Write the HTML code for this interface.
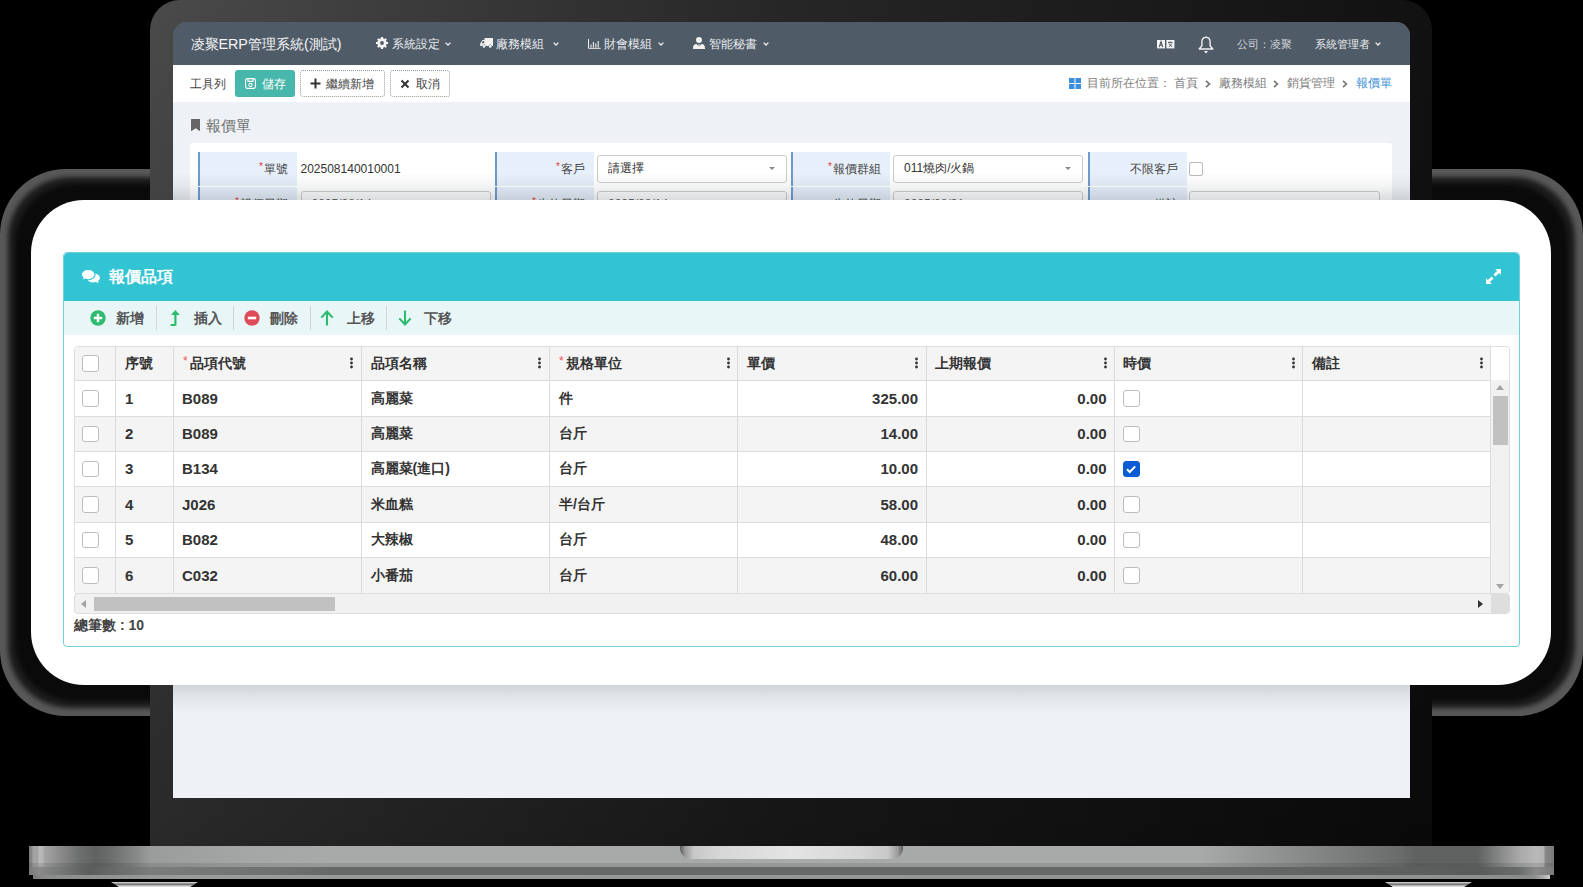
<!DOCTYPE html>
<html><head><meta charset="utf-8">
<style>
*{box-sizing:border-box;margin:0;padding:0}
html,body{width:1583px;height:887px;overflow:hidden;background:#000}
body{position:relative;font-family:"Liberation Sans",sans-serif;color:#333}
.a{position:absolute}
/* shadow ring on transparent bg */
#ringA{left:0;top:169px;width:1583px;height:547px;border-radius:66px;background:#585858}
#ringB{left:8px;top:177px;width:1567px;height:531px;border-radius:62px;background:#1c1c1c;filter:blur(2.5px)}
#ringC{left:15px;top:184px;width:1553px;height:517px;border-radius:60px;background:#0a0a0a;filter:blur(2.5px)}
#bezel{left:150px;top:0;width:1282px;height:846px;border-radius:30px 30px 0 0;
 background:linear-gradient(to right,#4a4a4a 0%,#262626 50%,#111 100%);overflow:hidden}
#bezel:after{content:"";position:absolute;left:0;top:0;right:0;bottom:0;background:linear-gradient(to bottom,rgba(0,0,0,0) 0%,rgba(0,0,0,.45) 100%)}
#screen{left:173px;top:22px;width:1237px;height:776px;border-radius:14px 14px 0 0;background:linear-gradient(to bottom,#4f5b67 0,#4f5b67 43px,#eef1f5 43px);overflow:hidden}
#hdr{left:0;top:0;width:1237px;height:43px;background:#4f5b67;color:#fff}
#tb{left:0;top:43px;width:1237px;height:37px;background:#fff}
.nav{position:absolute;top:0.6px;height:43px;line-height:43px;font-size:11.5px;color:#e9ecef;white-space:nowrap}
/* base */
#base{left:29px;top:846px;width:1525px;height:29px;
 background:linear-gradient(to right,#7c7c7c 0px,#8a8a8a 3px,#a3a3a3 4px,#a3a3a3 9px,#bababa 10px,#b8b8b8 13px,#a4a4a4 16px,#8c8d8c 30px,#6e706f 50px,#5f6261 66px,#6a6c6b 80px,#8a8c8b 110px,#9a9c9b 121px,#a5a7a6 221px,#a8aaa9 300px,#a8aaa9 1171px,#6a6c6b 1371px,#5f6261 1385px,#5f6261 1449px,#7c7e7d 1465px,#a8a8a8 1490px,#b8b8b8 1507px,#b3b3b3 1515px,#888 1516px,#7a7a7a 1525px)}
#base2{left:29px;top:863px;width:1525px;height:4px;background:rgba(40,50,50,.14)}
#base3{left:29px;top:867px;width:1525px;height:8px;background:linear-gradient(to right,#7a7a7a 0,#8a8a8a 10px,#5a5d5c 60px,#7a7c7b 121px,#6e7170 250px,#666968 300px,#666968 1171px,#5c5f5e 1385px,#585b5a 1449px,#6a6c6b 1490px,#8a8a8a 1507px,#7a7a7a 1525px)}
#lip{left:33px;top:875px;width:1517px;height:4px;background:linear-gradient(to right,#7a7a7a 0,#8a8a8a 10px,#8f9291 60px,#9a9c9b 150px,#8f9291 1400px,#8a8c8b 1500px,#aaa 1510px,#ccc 1517px)}
#notch{left:680px;top:846px;width:223px;height:13px;border-radius:0 0 11px 11px;
 background:linear-gradient(to right,#5a5a5a 0,#9a9a9a 5px,#c8c8c8 14px,#d6d6d6 40px,#e4e4e4 111px,#d6d6d6 180px,#c8c8c8 208px,#9a9a9a 218px,#5a5a5a 223px)}
.foot{top:882px;width:87px;height:5px;clip-path:polygon(0 0,100% 0,91% 100%,9% 100%);
 background:linear-gradient(to bottom,#d0d0d0 0,#c0c0c0 1px,#6a6a6a 2px,#8a8a8a 3px,#d8d8d8 4px)}

.bc{position:absolute;top:47px;height:28px;line-height:28px;font-size:11.5px;color:#808080;white-space:nowrap}
.frow{position:absolute;left:0;width:1237px;height:35px}
.lab{position:absolute;top:0;width:99px;height:34.5px;line-height:34.5px;background:#e7f0fa;border-left:2px solid #6c9bcf;text-align:right;padding-right:9px;font-size:12px;color:#444;white-space:nowrap}
.lab i{font-style:normal;color:#e33;font-size:10px;position:relative;top:-3px;margin-right:1px}
.sel,.inp{position:absolute;top:3.5px;width:190px;height:27.5px;border:1px solid #ccc;border-radius:3px;background:#fff;font-size:12px;line-height:25.5px;padding-left:10px;color:#333;white-space:nowrap}
.inp{padding-left:10px;color:#666}
.sel:after{content:"";position:absolute;right:11px;top:11px;border-left:3.5px solid transparent;border-right:3.5px solid transparent;border-top:3.5px solid #888}

.tbt{position:absolute;top:306px;height:24px;line-height:24px;font-size:14px;font-weight:bold;color:#555;white-space:nowrap}
.th{position:absolute;top:-1px;height:34px;line-height:34px;font-size:14px;font-weight:bold;color:#333;white-space:nowrap}
.th i{font-style:normal;color:#e55;font-size:12px;position:relative;top:-3px;margin-right:2px;font-weight:normal}
.td{position:absolute;height:35px;line-height:35px;font-size:14px;font-weight:bold;color:#333;white-space:nowrap}
.n{font-size:15px}
.cb{position:absolute;width:16.5px;height:16.5px;border:1px solid #bdbdbd;border-radius:3px;background:#fff}
.ck{background:#0b5cd5;border-color:#0b5cd5}
#card{left:31px;top:200px;width:1520px;height:485px;border-radius:53px;background:#fff}
#panel{left:63px;top:252px;width:1457px;height:395px;border:1px solid #6fd0db;border-radius:4px;background:#fff;overflow:hidden}
</style></head>
<body>
<div id="ringA" class="a"></div><div id="ringB" class="a"></div><div id="ringC" class="a"></div>
<div id="bezel" class="a"></div>
<div id="screen" class="a">
  <div id="hdr" class="a">
    <div class="nav" style="left:17.5px;font-size:14.3px;color:#f4f5f6">凌聚ERP管理系統(測試)</div>
    <svg class="a" style="left:202.5px;top:15px" width="12" height="12" viewBox="0 0 12 12"><path fill="#f2f2f2" fill-rule="evenodd" d="M5 0h2l.35 1.6 1.1.45L9.8 1.15l1.05 1.05-.9 1.35.45 1.1L12 5v2l-1.6.35-.45 1.1.9 1.35-1.05 1.05-1.35-.9-1.1.45L7 12H5l-.35-1.6-1.1-.45-1.35.9L1.15 9.8l.9-1.35-.45-1.1L0 7V5l1.6-.35.45-1.1-.9-1.35L2.2 1.15l1.35.9 1.1-.45zM6 4.1a1.9 1.9 0 1 0 0 3.8 1.9 1.9 0 1 0 0-3.8z"/></svg>
    <div class="nav" style="left:219px">系統設定</div>
    <svg class="a chev" style="left:271.5px;top:19.5px" width="6" height="4" viewBox="0 0 6 4"><path d="M.6.6 3 3 5.4.6" fill="none" stroke="#eee" stroke-width="1.3"/></svg>
    <svg class="a" style="left:306.5px;top:16px" width="13" height="10" viewBox="0 0 13 10"><path fill="#f2f2f2" d="M4.5 0H13v8h-1.2a1.6 1.6 0 0 0-3.2 0H5.6a1.6 1.6 0 0 0-3.2 0H.2V5.6L2.6 2H4.5zM1.6 5.2h2.6V2.9H3z"/><circle cx="4" cy="8.4" r="1.3" fill="#f2f2f2"/><circle cx="10.2" cy="8.4" r="1.3" fill="#f2f2f2"/></svg>
    <div class="nav" style="left:323px">廠務模組</div>
    <svg class="a chev" style="left:380px;top:19.5px" width="6" height="4" viewBox="0 0 6 4"><path d="M.6.6 3 3 5.4.6" fill="none" stroke="#eee" stroke-width="1.3"/></svg>
    <svg class="a" style="left:415px;top:16.5px" width="13" height="10" viewBox="0 0 13 10"><path fill="none" stroke="#eee" stroke-width="1" d="M.5 0v9.3H12.6"/><path fill="none" stroke="#eee" stroke-width="1.1" d="M3 5.5v3M5.4 3v5.5M7.8 4.5v4M10.2 2v6.5"/></svg>
    <div class="nav" style="left:431px">財會模組</div>
    <svg class="a chev" style="left:485px;top:19.5px" width="6" height="4" viewBox="0 0 6 4"><path d="M.6.6 3 3 5.4.6" fill="none" stroke="#eee" stroke-width="1.3"/></svg>
    <svg class="a" style="left:520px;top:15px" width="12" height="12" viewBox="0 0 12 12"><circle cx="6" cy="3.1" r="3" fill="#f2f2f2"/><path fill="#f2f2f2" d="M0 11.2C0 8.4 1.3 7.2 3.6 7L5.6 9.6 5.2 7.2h1.6L6.4 9.6 8.4 7C10.7 7.2 12 8.4 12 11.2V12H0z"/></svg>
    <div class="nav" style="left:536px">智能秘書</div>
    <svg class="a chev" style="left:590px;top:19.5px" width="6" height="4" viewBox="0 0 6 4"><path d="M.6.6 3 3 5.4.6" fill="none" stroke="#eee" stroke-width="1.3"/></svg>
    <svg class="a" style="left:984px;top:18px" width="18" height="9" viewBox="0 0 18 9"><rect x="0" y="0" width="8" height="8.4" fill="#f4f4f4"/><rect x="9.4" y="0" width="8" height="8.4" fill="#f4f4f4"/><path d="M2.3 7 4 1.6 5.7 7M3 5.2h2" fill="none" stroke="#4f5b67" stroke-width="1.1"/><path d="M11 2.4h4.5M13.2 1.6v1.4M11.6 3.4l3.6 3.4M15 3.4l-3 3.4" fill="none" stroke="#4f5b67" stroke-width="1"/></svg>
    <svg class="a" style="left:1025px;top:12.5px" width="16" height="19" viewBox="0 0 16 19"><path d="M8 1.2v1.2M8 2.4c-2.6 0-4.1 2-4.1 4.6v3.8L1.2 14h13.6l-2.7-3.2V7C12.1 4.4 10.6 2.4 8 2.4z" fill="none" stroke="#f2f2f2" stroke-width="1.4" stroke-linejoin="round"/><path d="M5.9 16.1h4.2L8 18.4z" fill="#f2f2f2"/></svg>
    <div class="nav" style="left:1064px;font-size:11px;color:#d0d4d8">公司：凌聚</div>
    <div class="nav" style="left:1141.5px;font-size:10.8px;color:#e9ecef">系統管理者</div>
    <svg class="a chev" style="left:1202px;top:19.5px" width="6" height="4" viewBox="0 0 6 4"><path d="M.6.6 3 3 5.4.6" fill="none" stroke="#eee" stroke-width="1.3"/></svg>
  </div>
  <div id="tb" class="a">
    <div class="a" style="left:17px;top:1px;height:37px;line-height:37px;font-size:12px;color:#444">工具列</div>
    <div class="a" style="left:61.5px;top:5px;width:60.5px;height:27px;border-radius:3px;background:#47b6ab"></div>
    <svg class="a" style="left:72px;top:13px" width="11" height="11" viewBox="0 0 11 11"><rect x=".6" y=".6" width="9.8" height="9.8" rx="1.6" fill="none" stroke="#fff" stroke-width="1.1"/><path d="M3 .8v2.6h5V.8" fill="none" stroke="#fff" stroke-width="1.1"/><circle cx="5.5" cy="6.9" r="1.6" fill="none" stroke="#fff" stroke-width="1.1"/></svg>
    <div class="a" style="left:89px;top:6px;height:27px;line-height:27px;font-size:12px;color:#fff">儲存</div>
    <div class="a" style="left:127px;top:5px;width:84.5px;height:27px;border:1px dotted #999;border-radius:3px"></div>
    <svg class="a" style="left:137px;top:13px" width="11" height="11" viewBox="0 0 11 11"><path d="M5.5.5v10M.5 5.5h10" stroke="#333" stroke-width="2"/></svg>
    <div class="a" style="left:153px;top:6px;height:27px;line-height:27px;font-size:12px;color:#444">繼續新增</div>
    <div class="a" style="left:216.5px;top:5px;width:60.5px;height:27px;border:1px dotted #999;border-radius:3px"></div>
    <svg class="a" style="left:227px;top:14px" width="10" height="10" viewBox="0 0 10 10"><path d="M1.5 1.5l7 7M8.5 1.5l-7 7" stroke="#333" stroke-width="2"/></svg>
    <div class="a" style="left:243px;top:6px;height:27px;line-height:27px;font-size:12px;color:#444">取消</div>
  </div>
  <!-- breadcrumb -->
  <svg class="a" style="left:896px;top:56px" width="12" height="11" viewBox="0 0 12 11"><rect x="0" y="0" width="5.5" height="5" fill="#3a8edc"/><rect x="6.5" y="0" width="5.5" height="5" fill="#3a8edc"/><rect x="0" y="6" width="5.5" height="5" fill="#3a8edc"/><rect x="6.5" y="6" width="5.5" height="5" fill="#3a8edc"/></svg>
  <div class="bc" style="left:913.5px">目前所在位置：</div>
  <div class="bc" style="left:1001px">首頁</div>
  <svg class="a" style="left:1032px;top:58px" width="6" height="8" viewBox="0 0 6 8"><path d="M1 .8 4.4 4 1 7.2" fill="none" stroke="#777" stroke-width="1.7"/></svg>
  <div class="bc" style="left:1046px">廠務模組</div>
  <svg class="a" style="left:1100px;top:58px" width="6" height="8" viewBox="0 0 6 8"><path d="M1 .8 4.4 4 1 7.2" fill="none" stroke="#777" stroke-width="1.7"/></svg>
  <div class="bc" style="left:1114px">銷貨管理</div>
  <svg class="a" style="left:1169px;top:58px" width="6" height="8" viewBox="0 0 6 8"><path d="M1 .8 4.4 4 1 7.2" fill="none" stroke="#777" stroke-width="1.7"/></svg>
  <div class="bc" style="left:1183px;color:#3c8fd8">報價單</div>
  <!-- page title -->
  <svg class="a" style="left:18px;top:96.8px" width="9.4" height="12.4" viewBox="0 0 9.4 12.4"><path d="M0 .4Q0 0 .4 0h8.6q.4 0 .4.4V12.4L4.7 9.2 0 12.4z" fill="#666"/></svg>
  <div class="a" style="left:33px;top:92px;height:24px;line-height:24px;font-size:15px;font-weight:300;color:#6f6f6f">報價單</div>
  <!-- form panel -->
  <div class="a" style="left:17px;top:121px;width:1202px;height:120px;background:#fff;border-radius:4px"></div>
  <div class="frow" style="top:129.5px">
    <div class="lab" style="left:25px"><i>*</i>單號</div>
    <div class="a" style="left:127.5px;top:0;height:34.5px;line-height:34.5px;font-size:12px;color:#333">202508140010001</div>
    <div class="lab" style="left:322px"><i>*</i>客戶</div>
    <div class="sel" style="left:424px">請選擇</div>
    <div class="lab" style="left:618px"><i>*</i>報價群組</div>
    <div class="sel" style="left:720px">011燒肉/火鍋</div>
    <div class="lab" style="left:915px">不限客戶</div>
    <div class="a" style="left:1016px;top:10.5px;width:13.5px;height:13.5px;border:1px solid #bbb;border-radius:2px;background:#fff"></div>
  </div>
  <div class="frow" style="top:165px">
    <div class="lab" style="left:25px"><i>*</i>報價日期</div>
    <div class="inp" style="left:127.5px">2025/08/14</div>
    <div class="lab" style="left:322px"><i>*</i>生效日期</div>
    <div class="inp" style="left:424px">2025/08/14</div>
    <div class="lab" style="left:618px">失效日期</div>
    <div class="inp" style="left:720px">2025/08/31</div>
    <div class="lab" style="left:915px">備註</div>
    <div class="inp" style="left:1016px;width:191px"></div>
  </div>
  <div class="a" style="left:0;top:150px;width:1237px;height:28px;background:linear-gradient(to bottom,rgba(30,40,50,0) 0%,rgba(30,40,50,.05) 50%,rgba(30,40,50,.16) 100%)"></div>
  <div class="a" style="left:0;top:663px;width:1237px;height:28px;background:linear-gradient(to top,rgba(30,40,50,0) 0%,rgba(30,40,50,.05) 50%,rgba(30,40,50,.14) 100%)"></div>
</div>
<div id="base" class="a"></div>
<div id="base2" class="a"></div>
<div id="base3" class="a"></div>
<div id="lip" class="a"></div>
<div id="notch" class="a"></div>
<div class="a foot" style="left:111px"></div>
<div class="a foot" style="left:1385px"></div>
<div id="card" class="a">
</div>
<div id="panel" class="a"></div>
<div class="a" style="left:64px;top:253px;width:1455px;height:48px;background:#33c4d3;border-radius:4px 4px 0 0"></div>
<svg class="a" style="left:81.5px;top:269.5px" width="18" height="14" viewBox="0 0 18 14"><path fill="#fff" d="M6.2 0C2.8 0 0 2 0 4.6c0 1.3.7 2.4 1.8 3.2L.9 9.6 3.4 8.6c.9.4 1.8.6 2.8.6 3.4 0 6.2-2 6.2-4.6S9.6 0 6.2 0z"/><path fill="#fff" d="M13.4 3.6c.1.3.1.6.1 1 0 3.1-3.2 5.6-7.2 5.6h-.5c1 1.3 3 2.2 5.2 2.2.9 0 1.8-.2 2.6-.5L16.8 13l-.9-1.9c1.3-.8 2.1-2 2.1-3.3 0-1.8-1.8-3.4-4.6-4.2z"/></svg>
<div class="a" style="left:109px;top:264px;height:24px;line-height:24px;font-size:16.2px;font-weight:bold;color:#fff">報價品項</div>
<svg class="a" style="left:1485.5px;top:268.8px" width="15" height="15" viewBox="0 0 15 15"><path fill="#fff" d="M9.2 0H15V5.8L13.1 3.9 9.4 7.6 7.4 5.6 11.1 1.9z"/><path fill="#fff" d="M5.8 15H0V9.2L1.9 11.1 5.6 7.4 7.6 9.4 3.9 13.1z"/></svg>
<div class="a" style="left:64px;top:301px;width:1455px;height:34px;background:#e9f6f8"></div>
<svg class="a" style="left:90px;top:310px" width="16" height="16" viewBox="0 0 16 16"><circle cx="8" cy="8" r="7.7" fill="#2dbb6e"/><path d="M8 3.8v8.4M3.8 8h8.4" stroke="#fff" stroke-width="2.4"/></svg>
<div class="tbt" style="left:116px">新增</div>
<svg class="a" style="left:169px;top:310px" width="16" height="16" viewBox="0 0 16 16"><path d="M6.4 15.2H1.6M6.4 15.4V3.5" stroke="#2dbb6e" stroke-width="2.2" fill="none"/><path d="M6.4 0 10.8 5H2z" fill="#2dbb6e"/></svg>
<div class="tbt" style="left:193.5px">插入</div>
<svg class="a" style="left:244px;top:310px" width="16" height="16" viewBox="0 0 16 16"><circle cx="8" cy="8" r="7.7" fill="#e04b5a"/><path d="M3.8 8h8.4" stroke="#fff" stroke-width="2.6"/></svg>
<div class="tbt" style="left:270px">刪除</div>
<svg class="a" style="left:320px;top:310px" width="16" height="16" viewBox="0 0 16 16"><path d="M7 15.5V2.5M1.3 7.6 7 1.6l5.7 6" stroke="#2dbb6e" stroke-width="2.1" fill="none"/></svg>
<div class="tbt" style="left:347px">上移</div>
<svg class="a" style="left:398px;top:310px" width="16" height="16" viewBox="0 0 16 16"><path d="M7 .5v13M1.3 8.4 7 14.4l5.7-6" stroke="#2dbb6e" stroke-width="2.1" fill="none"/></svg>
<div class="tbt" style="left:424px">下移</div>
<div class="a" style="left:156px;top:306px;width:1px;height:24px;background:#cfd8da"></div>
<div class="a" style="left:232.5px;top:306px;width:1px;height:24px;background:#cfd8da"></div>
<div class="a" style="left:309.5px;top:306px;width:1px;height:24px;background:#cfd8da"></div>
<div class="a" style="left:386px;top:306px;width:1px;height:24px;background:#cfd8da"></div>
<div class="a" style="left:74px;top:346px;width:1435.5px;height:247.5px;border:1px solid #ddd;border-radius:4px;background:#fff;overflow:hidden">
<div class="a" style="left:0;top:0;width:1415.5px;height:33.5px;background:#f4f4f4"></div>
<div class="a" style="left:0;top:33.5px;width:1415.5px;height:35.5px;background:#fff"></div>
<div class="a" style="left:0;top:69px;width:1415.5px;height:35.30000000000001px;background:#f4f4f4"></div>
<div class="a" style="left:0;top:104.30000000000001px;width:1415.5px;height:35.39999999999998px;background:#fff"></div>
<div class="a" style="left:0;top:139.7px;width:1415.5px;height:35.400000000000034px;background:#f4f4f4"></div>
<div class="a" style="left:0;top:175.10000000000002px;width:1415.5px;height:35.39999999999998px;background:#fff"></div>
<div class="a" style="left:0;top:210.5px;width:1415.5px;height:35.5px;background:#f4f4f4"></div>
<div class="a" style="left:0;top:33.0px;width:1415.5px;height:1px;background:#dcdcdc"></div>
<div class="a" style="left:0;top:68.5px;width:1415.5px;height:1px;background:#dcdcdc"></div>
<div class="a" style="left:0;top:103.80000000000001px;width:1415.5px;height:1px;background:#dcdcdc"></div>
<div class="a" style="left:0;top:139.2px;width:1415.5px;height:1px;background:#dcdcdc"></div>
<div class="a" style="left:0;top:174.60000000000002px;width:1415.5px;height:1px;background:#dcdcdc"></div>
<div class="a" style="left:0;top:210.0px;width:1415.5px;height:1px;background:#dcdcdc"></div>
<div class="a" style="left:0;top:245.5px;width:1415.5px;height:1px;background:#dcdcdc"></div>
<div class="a" style="left:39.5px;top:0;width:1px;height:246px;background:#dcdcdc"></div>
<div class="a" style="left:97.5px;top:0;width:1px;height:246px;background:#dcdcdc"></div>
<div class="a" style="left:285.5px;top:0;width:1px;height:246px;background:#dcdcdc"></div>
<div class="a" style="left:473.5px;top:0;width:1px;height:246px;background:#dcdcdc"></div>
<div class="a" style="left:662.0px;top:0;width:1px;height:246px;background:#dcdcdc"></div>
<div class="a" style="left:850.5px;top:0;width:1px;height:246px;background:#dcdcdc"></div>
<div class="a" style="left:1039.0px;top:0;width:1px;height:246px;background:#dcdcdc"></div>
<div class="a" style="left:1227.0px;top:0;width:1px;height:246px;background:#dcdcdc"></div>
<div class="a" style="left:1415.0px;top:0;width:1px;height:246px;background:#dcdcdc"></div>
<div class="th" style="left:50px">序號</div>
<div class="th" style="left:108px"><i>*</i>品項代號</div>
<svg class="a" style="left:275px;top:10px" width="3" height="12" viewBox="0 0 3 12"><circle cx="1.5" cy="2" r="1.4" fill="#333"/><circle cx="1.5" cy="6" r="1.4" fill="#333"/><circle cx="1.5" cy="10" r="1.4" fill="#333"/></svg>
<div class="th" style="left:295.5px">品項名稱</div>
<svg class="a" style="left:463px;top:10px" width="3" height="12" viewBox="0 0 3 12"><circle cx="1.5" cy="2" r="1.4" fill="#333"/><circle cx="1.5" cy="6" r="1.4" fill="#333"/><circle cx="1.5" cy="10" r="1.4" fill="#333"/></svg>
<div class="th" style="left:484px"><i>*</i>規格單位</div>
<svg class="a" style="left:651.5px;top:10px" width="3" height="12" viewBox="0 0 3 12"><circle cx="1.5" cy="2" r="1.4" fill="#333"/><circle cx="1.5" cy="6" r="1.4" fill="#333"/><circle cx="1.5" cy="10" r="1.4" fill="#333"/></svg>
<div class="th" style="left:672px">單價</div>
<svg class="a" style="left:840px;top:10px" width="3" height="12" viewBox="0 0 3 12"><circle cx="1.5" cy="2" r="1.4" fill="#333"/><circle cx="1.5" cy="6" r="1.4" fill="#333"/><circle cx="1.5" cy="10" r="1.4" fill="#333"/></svg>
<div class="th" style="left:860px">上期報價</div>
<svg class="a" style="left:1028.5px;top:10px" width="3" height="12" viewBox="0 0 3 12"><circle cx="1.5" cy="2" r="1.4" fill="#333"/><circle cx="1.5" cy="6" r="1.4" fill="#333"/><circle cx="1.5" cy="10" r="1.4" fill="#333"/></svg>
<div class="th" style="left:1048px">時價</div>
<svg class="a" style="left:1216.5px;top:10px" width="3" height="12" viewBox="0 0 3 12"><circle cx="1.5" cy="2" r="1.4" fill="#333"/><circle cx="1.5" cy="6" r="1.4" fill="#333"/><circle cx="1.5" cy="10" r="1.4" fill="#333"/></svg>
<div class="th" style="left:1236.5px">備註</div>
<svg class="a" style="left:1404.5px;top:10px" width="3" height="12" viewBox="0 0 3 12"><circle cx="1.5" cy="2" r="1.4" fill="#333"/><circle cx="1.5" cy="6" r="1.4" fill="#333"/><circle cx="1.5" cy="10" r="1.4" fill="#333"/></svg>
<div class="cb" style="left:7px;top:8.300000000000011px"></div>
<div class="cb" style="left:7px;top:43.0px"></div>
<div class="td n" style="left:50px;top:33.5px">1</div>
<div class="td n" style="left:107px;top:33.5px">B089</div>
<div class="td" style="left:295.5px;top:33.5px">高麗菜</div>
<div class="td" style="left:484px;top:33.5px">件</div>
<div class="td n" style="left:662.5px;width:180.5px;text-align:right;top:33.5px">325.00</div>
<div class="td n" style="left:851px;width:180.5px;text-align:right;top:33.5px">0.00</div>
<div class="cb" style="left:1048px;top:43.0px"></div>
<div class="cb" style="left:7px;top:78.5px"></div>
<div class="td n" style="left:50px;top:69px">2</div>
<div class="td n" style="left:107px;top:69px">B089</div>
<div class="td" style="left:295.5px;top:69px">高麗菜</div>
<div class="td" style="left:484px;top:69px">台斤</div>
<div class="td n" style="left:662.5px;width:180.5px;text-align:right;top:69px">14.00</div>
<div class="td n" style="left:851px;width:180.5px;text-align:right;top:69px">0.00</div>
<div class="cb" style="left:1048px;top:78.5px"></div>
<div class="cb" style="left:7px;top:113.80000000000001px"></div>
<div class="td n" style="left:50px;top:104.30000000000001px">3</div>
<div class="td n" style="left:107px;top:104.30000000000001px">B134</div>
<div class="td" style="left:295.5px;top:104.30000000000001px">高麗菜(進口)</div>
<div class="td" style="left:484px;top:104.30000000000001px">台斤</div>
<div class="td n" style="left:662.5px;width:180.5px;text-align:right;top:104.30000000000001px">10.00</div>
<div class="td n" style="left:851px;width:180.5px;text-align:right;top:104.30000000000001px">0.00</div>
<div class="cb ck" style="left:1048px;top:113.80000000000001px"><svg width="16" height="16" viewBox="0 0 16 16" style="position:absolute;left:-1px;top:-1px"><path d="M4 8.2 6.8 11 12.2 5.4" fill="none" stroke="#fff" stroke-width="2"/></svg></div>
<div class="cb" style="left:7px;top:149.2px"></div>
<div class="td n" style="left:50px;top:139.7px">4</div>
<div class="td n" style="left:107px;top:139.7px">J026</div>
<div class="td" style="left:295.5px;top:139.7px">米血糕</div>
<div class="td" style="left:484px;top:139.7px">半/台斤</div>
<div class="td n" style="left:662.5px;width:180.5px;text-align:right;top:139.7px">58.00</div>
<div class="td n" style="left:851px;width:180.5px;text-align:right;top:139.7px">0.00</div>
<div class="cb" style="left:1048px;top:149.2px"></div>
<div class="cb" style="left:7px;top:184.60000000000002px"></div>
<div class="td n" style="left:50px;top:175.10000000000002px">5</div>
<div class="td n" style="left:107px;top:175.10000000000002px">B082</div>
<div class="td" style="left:295.5px;top:175.10000000000002px">大辣椒</div>
<div class="td" style="left:484px;top:175.10000000000002px">台斤</div>
<div class="td n" style="left:662.5px;width:180.5px;text-align:right;top:175.10000000000002px">48.00</div>
<div class="td n" style="left:851px;width:180.5px;text-align:right;top:175.10000000000002px">0.00</div>
<div class="cb" style="left:1048px;top:184.60000000000002px"></div>
<div class="cb" style="left:7px;top:220.0px"></div>
<div class="td n" style="left:50px;top:210.5px">6</div>
<div class="td n" style="left:107px;top:210.5px">C032</div>
<div class="td" style="left:295.5px;top:210.5px">小番茄</div>
<div class="td" style="left:484px;top:210.5px">台斤</div>
<div class="td n" style="left:662.5px;width:180.5px;text-align:right;top:210.5px">60.00</div>
<div class="td n" style="left:851px;width:180.5px;text-align:right;top:210.5px">0.00</div>
<div class="cb" style="left:1048px;top:220.0px"></div>
<div class="a" style="left:1416.0px;top:33.0px;width:19px;height:213px;background:#f1f1f1"></div>
<svg class="a" style="left:1421px;top:38px" width="8" height="5" viewBox="0 0 8 5"><path d="M0 5 4 0 8 5z" fill="#a3a3a3"/></svg>
<div class="a" style="left:1418px;top:48.69999999999999px;width:15px;height:49.5px;background:#c1c1c1"></div>
<svg class="a" style="left:1421px;top:236.5px" width="8" height="5" viewBox="0 0 8 5"><path d="M0 0 4 5 8 0z" fill="#a3a3a3"/></svg>
</div>
<div class="a" style="left:74px;top:592.5px;width:1435.5px;height:21.5px;border:1px solid #ddd;border-radius:4px;background:#f1f1f1;overflow:hidden">
<div class="a" style="left:1416px;top:0;width:19px;height:20px;background:#dedede"></div>
<svg class="a" style="left:6px;top:6px" width="5" height="8" viewBox="0 0 5 8"><path d="M5 0 0 4 5 8z" fill="#a3a3a3"/></svg>
<div class="a" style="left:19.2px;top:3px;width:240.6px;height:14.5px;background:#c1c1c1"></div>
<svg class="a" style="left:1403px;top:6px" width="5" height="8" viewBox="0 0 5 8"><path d="M0 0 5 4 0 8z" fill="#333"/></svg>
</div>
<div class="a" style="left:74px;top:613px;height:24px;line-height:24px;font-size:14px;font-weight:bold;color:#444">總筆數 : 10</div>
</body></html>
